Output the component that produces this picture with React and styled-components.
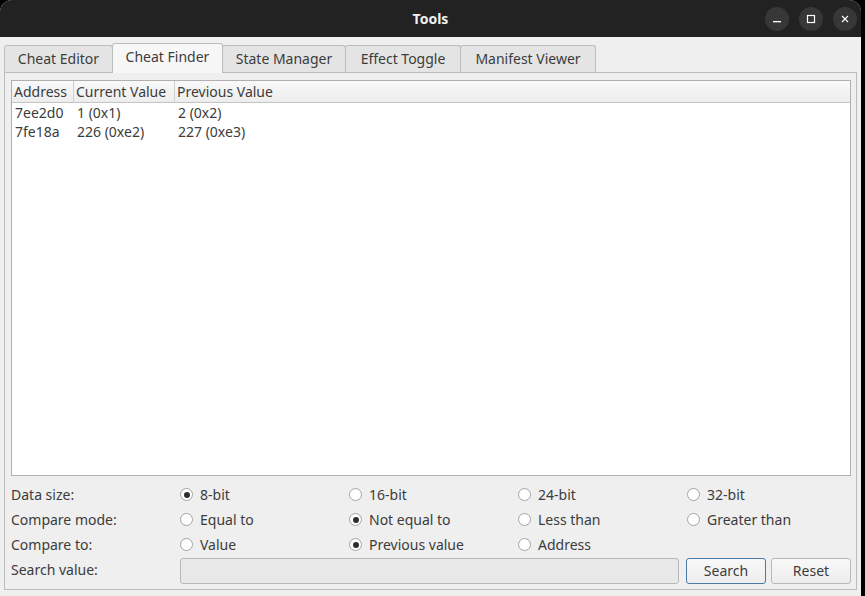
import React from 'react'
import styled, { createGlobalStyle, css } from 'styled-components'

const GlobalStyle = createGlobalStyle`
  html, body {
    margin: 0;
    background: #000;
  }
  body {
    font-family: "Noto Sans", "DejaVu Sans", sans-serif;
    font-size: 14px;
    color: #3c3c3c;
  }
`

const tabs = [
  { name: 'Cheat Editor', width: 109 },
  { name: 'Cheat Finder', width: 111 },
  { name: 'State Manager', width: 124 },
  { name: 'Effect Toggle', width: 116 },
  { name: 'Manifest Viewer', width: 136 },
]

const results = [
  { address: '7ee2d0', current: '1 (0x1)', previous: '2 (0x2)' },
  { address: '7fe18a', current: '226 (0xe2)', previous: '227 (0xe3)' },
]

const options = [
  { label: 'Data size:', items: ['8-bit', '16-bit', '24-bit', '32-bit'], checked: 0 },
  { label: 'Compare mode:', items: ['Equal to', 'Not equal to', 'Less than', 'Greater than'], checked: 1 },
  { label: 'Compare to:', items: ['Value', 'Previous value', 'Address'], checked: 1 },
]

export default function App() {
  return (
    <>
      <GlobalStyle />
      <Window>
        <TitleBar>
          <Title>Tools</Title>
          <Controls>
            <WinButton aria-label="minimize">
              <svg width="10" height="10" viewBox="0 0 10 10">
                <rect x="1" y="7" width="8" height="1.3" fill="#fff" />
              </svg>
            </WinButton>
            <WinButton aria-label="maximize">
              <svg width="10" height="10" viewBox="0 0 10 10">
                <rect x="1.5" y="1.5" width="7" height="7" fill="none" stroke="#fff" strokeWidth="1.2" />
              </svg>
            </WinButton>
            <WinButton aria-label="close">
              <svg width="10" height="10" viewBox="0 0 10 10">
                <path d="M2 2 L8 8 M8 2 L2 8" stroke="#fff" strokeWidth="1.1" />
              </svg>
            </WinButton>
          </Controls>
        </TitleBar>

        <Body>
          <TabBar>
            {tabs.map((t) => (
              <Tab key={t.name} $w={t.width} $active={t.name === 'Cheat Finder'}>
                {t.name}
              </Tab>
            ))}
          </TabBar>

          <Panel>
            <Table>
              <HeaderRow>
                <HeadCell $w={62}>Address</HeadCell>
                <HeadCell $w={101}>Current Value</HeadCell>
                <HeadCell>Previous Value</HeadCell>
              </HeaderRow>
              <Rows>
                {results.map((r) => (
                  <Row key={r.address}>
                    <Cell $w={62}>{r.address}</Cell>
                    <Cell $w={101}>{r.current}</Cell>
                    <Cell>{r.previous}</Cell>
                  </Row>
                ))}
              </Rows>
            </Table>

            <Form>
              {options.map((o) => (
                <React.Fragment key={o.label}>
                  <Label>{o.label}</Label>
                  {[0, 1, 2, 3].map((i) =>
                    o.items[i] ? (
                      <RadioOption key={i}>
                        <Radio $checked={i === o.checked} />
                        {o.items[i]}
                      </RadioOption>
                    ) : (
                      <span key={i} />
                    )
                  )}
                </React.Fragment>
              ))}
              <Label>Search value:</Label>
              <SearchRow>
                <Input />
                <Button $focus>Search</Button>
                <Button>Reset</Button>
              </SearchRow>
            </Form>
          </Panel>
        </Body>
      </Window>
    </>
  )
}

const Window = styled.div`
  width: 861px;
  height: 596px;
  display: flex;
  flex-direction: column;
  background: #efefef;
  border-radius: 12px 12px 0 0;
  overflow: hidden;
`

const TitleBar = styled.div`
  height: 37px;
  flex: none;
  background: #222;
  position: relative;
  display: flex;
  align-items: center;
  justify-content: center;
`

const Title = styled.div`
  color: #f0f0f0;
  font-weight: bold;
  font-size: 14px;
`

const Controls = styled.div`
  position: absolute;
  right: 4px;
  top: 7px;
  display: flex;
  gap: 10px;
`

const WinButton = styled.div`
  width: 24px;
  height: 24px;
  border-radius: 50%;
  background: #373737;
  display: flex;
  align-items: center;
  justify-content: center;
`

const Body = styled.div`
  flex: 1;
  display: flex;
  flex-direction: column;
  padding: 6px 4px 0 4px;
`

const TabBar = styled.div`
  display: flex;
  align-items: flex-end;
  margin-bottom: -1px;
`

const Tab = styled.div`
  box-sizing: border-box;
  width: ${({ $w }) => $w}px;
  height: 28px;
  padding-bottom: 1px;
  display: flex;
  align-items: center;
  justify-content: center;
  background: #e4e4e4;
  border: 1px solid #bdbdbd;
  border-bottom: none;
  border-radius: 3px 3px 0 0;
  margin-left: -1px;
  line-height: 1;
  &:first-child {
    margin-left: 0;
  }
  ${({ $active }) =>
    $active &&
    css`
      position: relative;
      z-index: 1;
      height: 30px;
      background: #f7f7f7;
      padding-bottom: 3px;
    `}
`

const Panel = styled.div`
  flex: 1;
  border: 1px solid #bdbdbd;
  display: flex;
  flex-direction: column;
  padding: 7px 5px 6px 6px;
  margin-bottom: 6px;
`

const Table = styled.div`
  height: 396px;
  box-sizing: border-box;
  background: #fff;
  border: 1px solid #b0b0b0;
  display: flex;
  flex-direction: column;
`

const HeaderRow = styled.div`
  height: 21px;
  flex: none;
  display: flex;
  background: linear-gradient(#f9f9f9, #ededed);
  border-bottom: 1px solid #c4c4c4;
`

const HeadCell = styled.div`
  ${({ $w }) => ($w ? `width: ${$w}px;` : 'flex: 1;')}
  padding-left: 2px;
  display: flex;
  align-items: center;
  border-right: 1px solid #cfcfcf;
  box-sizing: border-box;
  &:last-child {
    border-right: none;
  }
`

const Rows = styled.div`
  padding-top: 0;
`

const Row = styled.div`
  height: 19px;
  display: flex;
  align-items: center;
`

const Cell = styled.div`
  ${({ $w }) => ($w ? `width: ${$w}px;` : 'flex: 1;')}
  padding-left: 3px;
  box-sizing: border-box;
`

const Form = styled.div`
  margin-top: 6px;
  display: grid;
  grid-template-columns: 169px 169px 169px 169px 1fr;
  grid-auto-rows: 25px;
  align-items: center;
`

const Label = styled.div``

const RadioOption = styled.div`
  display: flex;
  align-items: center;
  gap: 7px;
`

const Radio = styled.span`
  width: 13px;
  height: 13px;
  flex: none;
  box-sizing: border-box;
  border-radius: 50%;
  border: 1px solid #a3a3a3;
  background: #fff;
  display: flex;
  align-items: center;
  justify-content: center;
  ${({ $checked }) =>
    $checked &&
    css`
      &::after {
        content: '';
        width: 6px;
        height: 6px;
        border-radius: 50%;
        background: #2e2e2e;
      }
    `}
`

const SearchRow = styled.div`
  grid-column: 2 / 6;
  display: flex;
  gap: 6px;
  height: 26px;
  margin-top: 2px;
`

const Input = styled.div`
  width: 499px;
  box-sizing: border-box;
  border: 1px solid #b8b8b8;
  border-radius: 3px;
  background: #e8e8e8;
`

const Button = styled.div`
  width: 80px;
  box-sizing: border-box;
  border: 1px solid ${({ $focus }) => ($focus ? '#4a7aa8' : '#b8b8b8')};
  border-radius: 3px;
  background: linear-gradient(#f8f8f8, #ededed);
  display: flex;
  align-items: center;
  justify-content: center;
  margin-left: ${({ $focus }) => ($focus ? '1px' : '-1px')};
`
